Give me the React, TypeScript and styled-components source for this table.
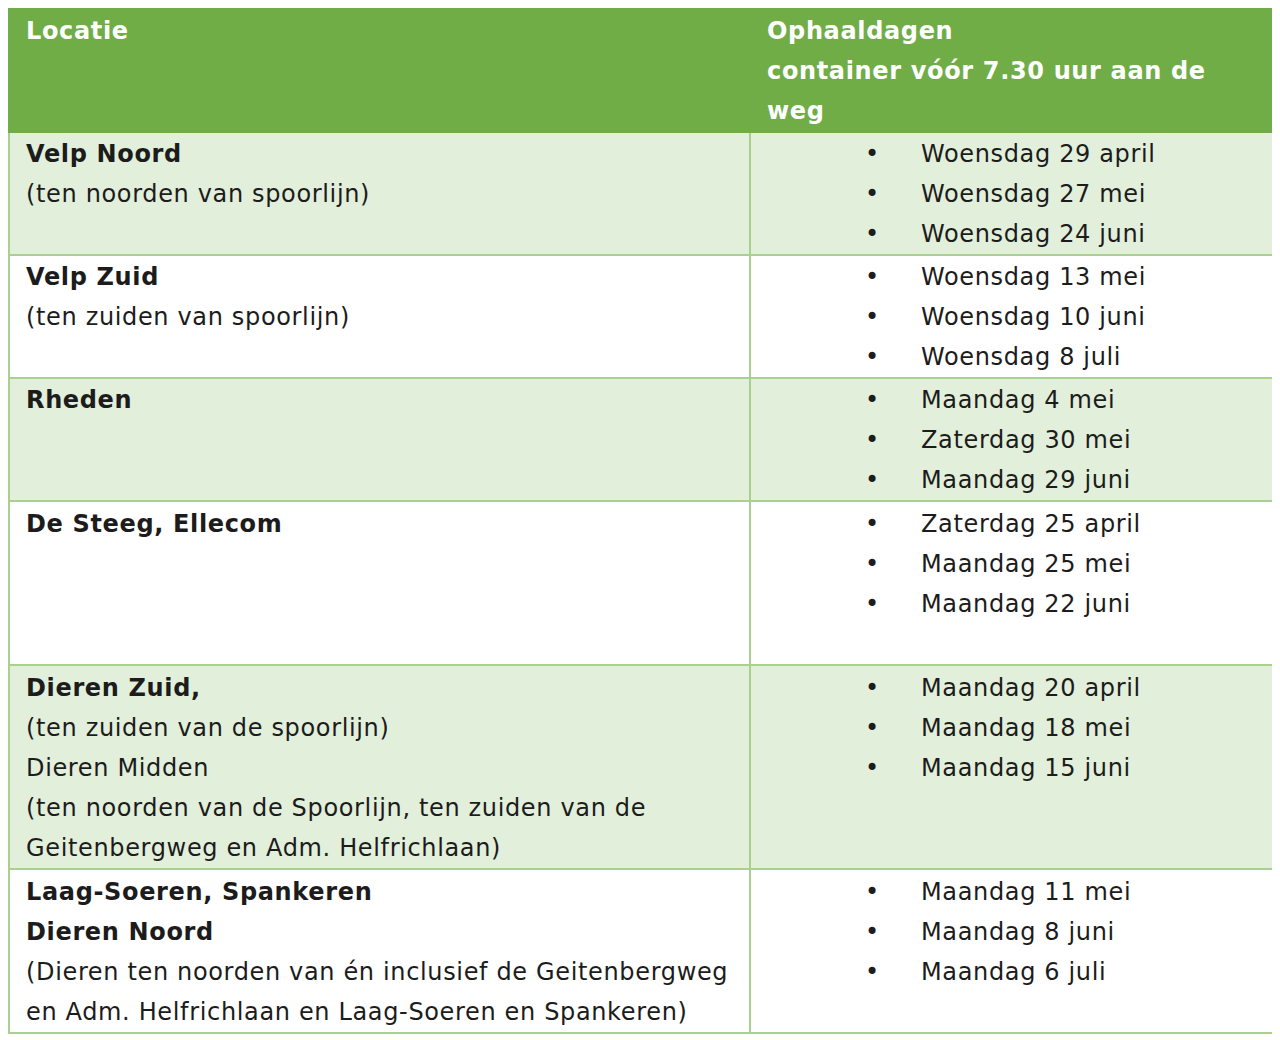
import styled, { createGlobalStyle } from "styled-components";

const GlobalStyle = createGlobalStyle`
  html {
    overflow: hidden;
  }
  body {
    margin: 8px;
    background: #ffffff;
    font-family: "DejaVu Sans", Verdana, sans-serif;
    color: #1c1c1c;
  }
`;

const Table = styled.table`
  width: 1268px;
  border-collapse: collapse;
  font-size: 24px;
  letter-spacing: 0.65px;
  line-height: 40px;
  table-layout: fixed;
`;

const HeadCell = styled.th`
  background: #70ad47;
  color: #ffffff;
  font-weight: bold;
  text-align: left;
  vertical-align: top;
  padding: 1px 14px 0 16px;
  border: 2px solid #70ad47;
`;

const Row = styled.tr<{ $shaded: boolean }>`
  background: ${(p) => (p.$shaded ? "#e2efda" : "#ffffff")};
`;

const Cell = styled.td<{ $tall?: boolean }>`
  vertical-align: top;
  padding: ${(p) => (p.$tall ? "2px 10px 0 16px" : "1px 10px 0 16px")};
  border: 2px solid #a9d08e;
`;

const TextLine = styled.div<{ $bold?: boolean }>`
  font-weight: ${(p) => (p.$bold ? "bold" : "normal")};
  white-space: nowrap;
`;

const Spacer = styled.div`
  height: 40px;
`;

const DateList = styled.ul`
  list-style: none;
  margin: 0;
  padding: 0 0 0 98px;
`;

const DateItem = styled.li`
  display: flex;
  &::before {
    content: "•";
    width: 56px;
    flex-shrink: 0;
  }
`;

type Entry = {
  lines: { text: string; bold?: boolean }[];
  dates: string[];
  extra?: number;
};

const entries: Entry[] = [
  {
    lines: [{ text: "Velp Noord", bold: true }, { text: "(ten noorden van spoorlijn)" }],
    dates: ["Woensdag 29 april", "Woensdag 27 mei", "Woensdag 24 juni"],
  },
  {
    lines: [{ text: "Velp Zuid", bold: true }, { text: "(ten zuiden van spoorlijn)" }],
    dates: ["Woensdag 13 mei", "Woensdag 10 juni", "Woensdag 8 juli"],
  },
  {
    lines: [{ text: "Rheden", bold: true }],
    dates: ["Maandag 4 mei", "Zaterdag 30 mei", "Maandag 29 juni"],
  },
  {
    lines: [{ text: "De Steeg, Ellecom", bold: true }],
    dates: ["Zaterdag 25 april", "Maandag 25 mei", "Maandag 22 juni"],
    extra: 1,
  },
  {
    lines: [
      { text: "Dieren Zuid,", bold: true },
      { text: "(ten zuiden van de spoorlijn)" },
      { text: "Dieren Midden" },
      { text: "(ten noorden van de Spoorlijn, ten zuiden van de" },
      { text: "Geitenbergweg en Adm. Helfrichlaan)" },
    ],
    dates: ["Maandag 20 april", "Maandag 18 mei", "Maandag 15 juni"],
  },
  {
    lines: [
      { text: "Laag-Soeren, Spankeren", bold: true },
      { text: "Dieren Noord", bold: true },
      { text: "(Dieren ten noorden van én inclusief de Geitenbergweg" },
      { text: "en Adm. Helfrichlaan en Laag-Soeren en Spankeren)" },
    ],
    dates: ["Maandag 11 mei", "Maandag 8 juni", "Maandag 6 juli"],
  },
];

export default function App() {
  return (
    <>
      <GlobalStyle />
      <Table>
        <colgroup>
          <col style={{ width: 741 }} />
          <col />
        </colgroup>
        <thead>
          <tr>
            <HeadCell>Locatie</HeadCell>
            <HeadCell>
              Ophaaldagen
              <br />
              container vóór 7.30 uur aan de
              <br />
              weg
            </HeadCell>
          </tr>
        </thead>
        <tbody>
          {entries.map((e, i) => {
            const tall = Math.max(e.lines.length, e.dates.length + (e.extra ?? 0)) > 3;
            return (
              <Row key={i} $shaded={i % 2 === 0}>
                <Cell $tall={tall}>
                  {e.lines.map((l, j) => (
                    <TextLine key={j} $bold={l.bold}>
                      {l.text}
                    </TextLine>
                  ))}
                </Cell>
                <Cell $tall={tall}>
                  <DateList>
                    {e.dates.map((d) => (
                      <DateItem key={d}>{d}</DateItem>
                    ))}
                  </DateList>
                  {Array.from({ length: e.extra ?? 0 }).map((_, k) => (
                    <Spacer key={k} />
                  ))}
                </Cell>
              </Row>
            );
          })}
        </tbody>
      </Table>
    </>
  );
}
